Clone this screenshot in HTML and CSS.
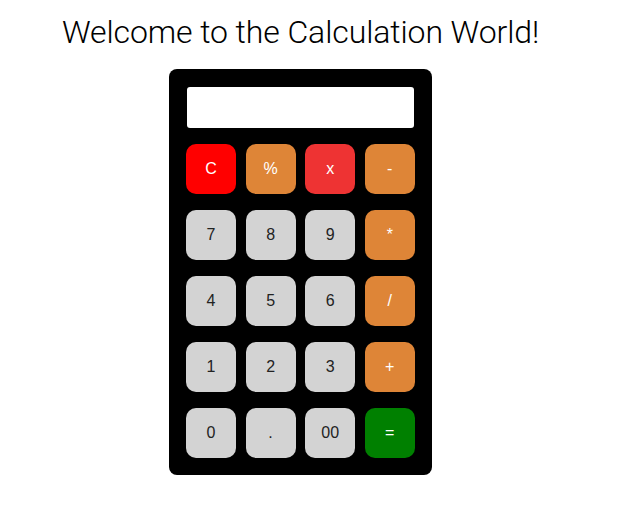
FILE: index.html
```html
<!DOCTYPE html>
<html>
<head>
<meta charset="utf-8">
<link rel="stylesheet" href="styles.css">
</head>
<body>
<main class="page">
  <h1 class="title">Welcome to the Calculation World!</h1>
  <div class="calc">
    <div class="display"></div>
    <div class="keys">
      <button class="key clear">C</button>
      <button class="key op">%</button>
      <button class="key del">x</button>
      <button class="key op">-</button>
      <button class="key">7</button>
      <button class="key">8</button>
      <button class="key">9</button>
      <button class="key op">*</button>
      <button class="key">4</button>
      <button class="key">5</button>
      <button class="key">6</button>
      <button class="key op">/</button>
      <button class="key">1</button>
      <button class="key">2</button>
      <button class="key">3</button>
      <button class="key op">+</button>
      <button class="key">0</button>
      <button class="key">.</button>
      <button class="key">00</button>
      <button class="key eq">=</button>
    </div>
  </div>
</main>
</body>
</html>
```

FILE: styles.css
```css
html, body {
  margin: 0;
  background: #ffffff;
}
body {
  padding: 8px;
}
.page {
  width: 585px;
  display: flex;
  flex-direction: column;
  align-items: center;
}
.title {
  margin: 4px 0 0 0;
  font-family: Roboto, "Noto Sans", sans-serif;
  font-weight: 300;
  font-size: 32px;
  line-height: 40px;
  color: #000;
  letter-spacing: -0.1px;
}
.calc {
  margin-top: 17px;
  width: 229px;
  background: #000;
  border-radius: 8px;
  padding: 18px 17px 17px 17px;
}
.display {
  width: 227px;
  height: 41px;
  margin-left: 1px;
  background: #fff;
  border-radius: 3px;
}
.keys {
  margin-top: 16px;
  display: grid;
  grid-template-columns: repeat(4, 50px);
  grid-auto-rows: 50px;
  column-gap: 9.6px;
  row-gap: 16px;
}
.key {
  border: none;
  border-radius: 10px;
  background: #d3d3d3;
  color: #222;
  font-family: "Liberation Sans", Arial, sans-serif;
  font-size: 16px;
  padding: 0;
  margin: 0;
}
.op {
  background: #de8537;
  color: #fff;
}
.clear {
  background: #ff0000;
  color: #fff;
}
.del {
  background: #ee3333;
  color: #fff;
}
.eq {
  background: #008000;
  color: #fff;
}
```
